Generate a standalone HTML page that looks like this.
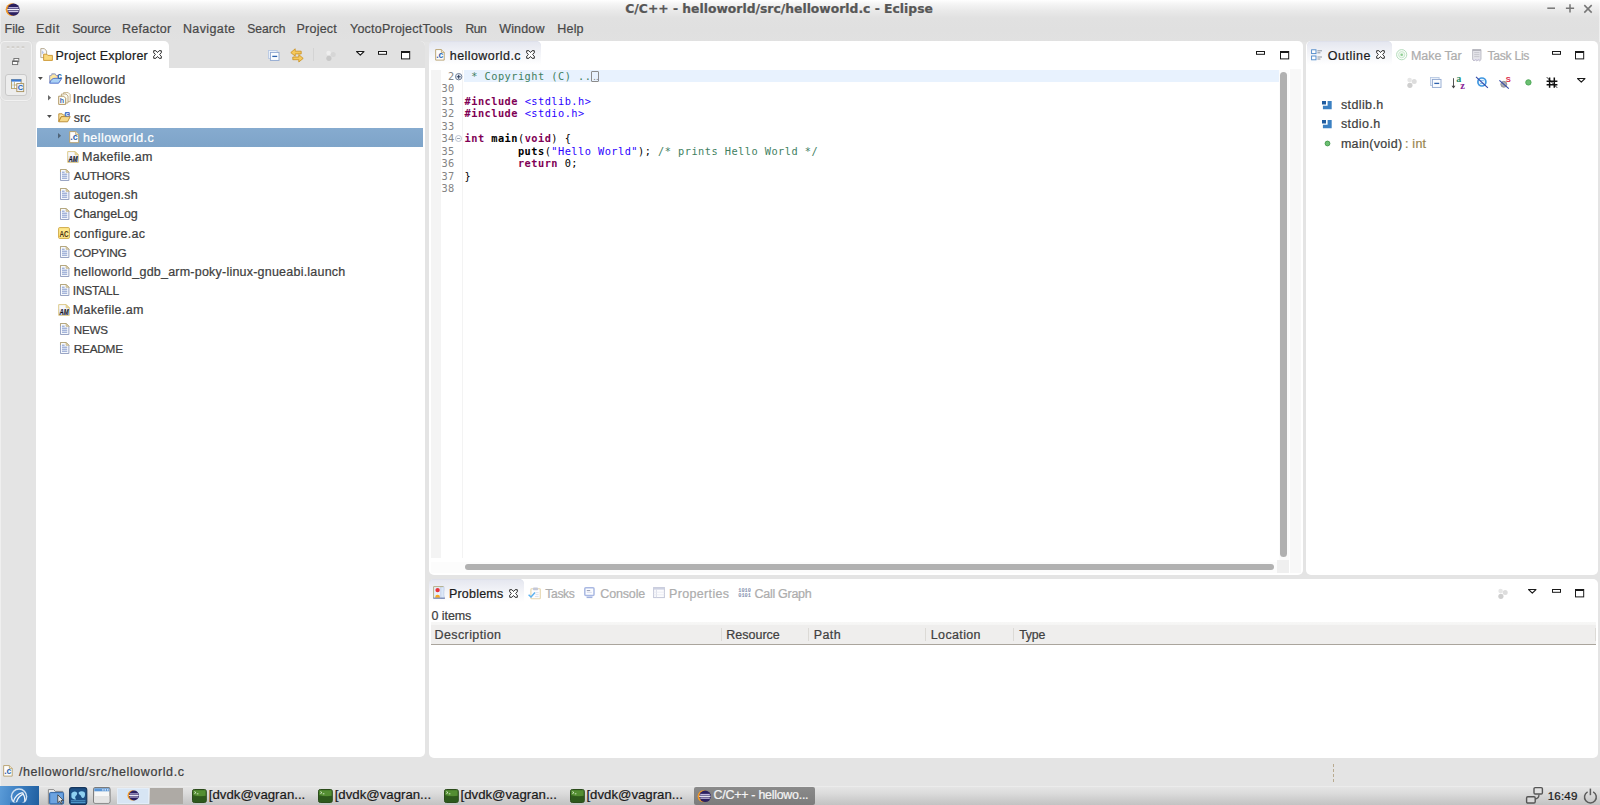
<!DOCTYPE html>
<html lang="en">
<head>
<meta charset="utf-8">
<title>C/C++ - helloworld/src/helloworld.c - Eclipse</title>
<style>
*{box-sizing:border-box;margin:0;padding:0}
html,body{width:1600px;height:805px;overflow:hidden;background:#e4e4e4}
body{position:relative;font-family:"Liberation Sans",sans-serif;font-size:12.5px;letter-spacing:.25px;color:#3c3c3c;line-height:1}
.abs{position:absolute}
svg{overflow:visible;opacity:.999}
svg text{letter-spacing:0}
.t{position:absolute;white-space:pre;line-height:16px;height:16px;-webkit-text-stroke:.22px currentColor}
#titlebar{left:0;top:0;width:1600px;height:42px;background:linear-gradient(#ffffff 0,#f5f5f5 4px,#e9e9e9 11px,#e1e1e1 18px,#e0e0e0 30px,#e1e1e1 42px)}
#title{left:625.3px;top:0.5px;font-family:"DejaVu Sans","Liberation Sans",sans-serif;font-weight:bold;font-size:12.35px;letter-spacing:0;color:#575757}
.panel{position:absolute;background:#fff;border-radius:5px}
.tab{position:absolute;background:#fff;border-radius:5px 5px 0 0}
.act{color:#1e1e1e}
.dim{color:#a2a2a2}
.code{position:absolute;white-space:pre;font-family:"DejaVu Sans Mono","Liberation Mono",monospace;font-size:10.3px;letter-spacing:.47px;line-height:12.5px;height:12.5px;color:#000}
.ln{color:#848484}
.kw{color:#7f0055;font-weight:bold}
.b{font-weight:bold}
.inc{color:#2a00ff}
.cm{color:#3f7f5f}
.tk{color:#1a1a1a;font-size:13px;letter-spacing:.2px}
</style>
</head>
<body>
<div id="titlebar" class="abs"></div>
<div id="title" class="t">C/C++ - helloworld/src/helloworld.c - Eclipse</div>
<svg class="abs" style="left:4.76px;top:2.89px;" width="14.8433" height="13.2167" viewBox="0 0 14.8433 13.2167"><circle cx="6.91333" cy="6.60833" r="6.283" fill="#f39a27"/><circle cx="8.54" cy="6.60833" r="6.1" fill="#2c2060"/><rect x="3.45667" y="4.06667" width="9.96333" height="1.27083" fill="#bdb4dc"/><rect x="2.23667" y="5.9475" width="11.9967" height="1.32167" fill="#f4f2fa"/><rect x="3.45667" y="7.93" width="9.96333" height="1.27083" fill="#cfc8e6"/></svg>
<svg class="abs" style="left:1545.00px;top:3.00px;" width="52" height="14" viewBox="0 0 52 14"><path d="M2.300 5.200h7.700" stroke="#767676" stroke-width="1.500" fill="none"/><path d="M20.900 5.300h8.200M25 1.200v8.300" stroke="#767676" stroke-width="1.500" fill="none"/><path d="M39.300 2.100l7.400 7.500M46.700 2.100l-7.400 7.500" stroke="#767676" stroke-width="1.500" fill="none"/></svg>
<div class="t" style="left:4.60px;top:21.00px;letter-spacing:0.003px;color:#484848">File</div>
<div class="t" style="left:36.10px;top:21.00px;letter-spacing:0.611px;color:#484848">Edit</div>
<div class="t" style="left:72.20px;top:21.00px;letter-spacing:-0.171px;color:#484848">Source</div>
<div class="t" style="left:121.90px;top:21.00px;letter-spacing:0.303px;color:#484848">Refactor</div>
<div class="t" style="left:182.90px;top:21.00px;letter-spacing:0.388px;color:#484848">Navigate</div>
<div class="t" style="left:247.30px;top:21.00px;letter-spacing:-0.019px;font-size:12.1px;color:#484848">Search</div>
<div class="t" style="left:296.50px;top:21.00px;letter-spacing:0.228px;color:#484848">Project</div>
<div class="t" style="left:350.00px;top:21.00px;letter-spacing:0.228px;color:#484848">YoctoProjectTools</div>
<div class="t" style="left:465.40px;top:21.00px;letter-spacing:-0.430px;font-size:12.1px;color:#484848">Run</div>
<div class="t" style="left:499.20px;top:21.00px;letter-spacing:0.174px;color:#484848">Window</div>
<div class="t" style="left:557.30px;top:21.00px;letter-spacing:0.181px;color:#484848">Help</div>
<div class="abs" style="left:0;top:0;width:1px;height:786px;background:rgba(255,255,255,.4)"></div>
<div class="abs" style="left:1598.700px;top:0;width:1.300px;height:42px;background:rgba(255,255,255,.45)"></div>
<div class="abs" style="left:.4px;top:41.4px;width:31.8px;height:60px;background:#e1e1e1;border:1px solid #f1f1f1;border-radius:4px 4px 6px 6px;box-shadow:0 0 0 .5px #dadada"></div>
<svg class="abs" style="left:6.00px;top:45.60px;" width="20" height="3" viewBox="0 0 20 3"><path d="M.8 1.200h2.600M5.700 1.200h2.600M10.600 1.200h2.600M15.700 1.200h2.600" stroke="#c6c2ba" stroke-width="1.300"/><path d="M.8 2.300h2.600M5.700 2.300h2.600M10.600 2.300h2.600M15.700 2.300h2.600" stroke="#f2f2f2" stroke-width=".8"/></svg>
<svg class="abs" style="left:12.00px;top:58.00px;" width="8" height="7.4" viewBox="0 0 8 7.4"><rect x="1.900" y=".5" width="4.900" height="3.300" fill="#f6f6f6" stroke="#6e6e6e" stroke-width=".9"/><rect x=".5" y="3.100" width="5.200" height="3.500" fill="#fbfbfb" stroke="#6e6e6e" stroke-width=".9"/><path d="M.5 3.300h5.200" stroke="#5a5a5a" stroke-width="1.200"/></svg>
<div class="abs" style="left:5.3px;top:74.3px;width:21.4px;height:21.4px;background:#ededed;border:1px solid #c9c9c9;border-radius:3px"></div>
<svg class="abs" style="left:10.60px;top:78.80px;" width="14" height="14" viewBox="0 0 14 14"><rect x=".5" y=".5" width="9.600" height="9" fill="#fff" stroke="#b39c62" stroke-width=".9"/><rect x=".3" y=".3" width="10" height="2.300" fill="#3b7ad6"/><path d="M3.400 2.800v6.600M.5 6h9.600" stroke="#b8a26c" stroke-width=".8"/><rect x="1" y="3.100" width="2" height="2.400" fill="#dff1ff"/><rect x="1" y="6.600" width="2" height="2.500" fill="#dff1ff"/><rect x="5.800" y="4.600" width="6.900" height="8" fill="#eaf1fb" stroke="#a8905a" stroke-width=".9"/><text x="9.300" y="11.400" font-family="Liberation Sans,sans-serif" font-weight="bold" font-size="7.400" fill="#2a62b4" text-anchor="middle">C</text></svg>
<div class="panel" style="left:36px;top:41.4px;width:388.6px;height:716.1px"></div>
<div class="abs" style="left:36px;top:41.4px;width:388.6px;height:26.2px;background:#e1e1e1;border-radius:5px 5px 0 0"></div>
<div class="tab" style="left:36px;top:41.4px;width:132.6px;height:27px"></div>
<div class="panel" style="left:428.8px;top:41px;width:874.2px;height:534.4px"></div>
<div class="panel" style="left:1306.3px;top:41px;width:291.4px;height:534.4px"></div>
<div class="panel" style="left:428.8px;top:579px;width:1168.9px;height:178.5px"></div>
<div class="tab" style="left:429.2px;top:41.4px;width:111.6px;height:26px;box-shadow:inset 0 .6px 0 #d9dce8;background:linear-gradient(#e4e6ef,#f3f4f8 50%,#fff 92%)"></div>
<div class="tab" style="left:1306.6px;top:41.4px;width:85.4px;height:26px;box-shadow:inset 0 .6px 0 #d9dce8;background:linear-gradient(#e4e6ef,#f3f4f8 50%,#fff 92%)"></div>
<div class="tab" style="left:429.2px;top:579.3px;width:95.200px;height:25px;box-shadow:inset 0 .6px 0 #d9dce8;background:linear-gradient(#e4e6ef,#f3f4f8 50%,#fff 92%)"></div>
<svg class="abs" style="left:39.50px;top:47.50px;" width="14" height="13.5" viewBox="0 0 14 13.5"><path d="M.8 .6h3.6l2.2 2.4v6.6H.8z" fill="#f7f7fb" stroke="#a89a78" stroke-width=".8"/><path d="M1.8 2.2l2.2 2.4-2.2 2z" fill="#b9c6e8"/><path d="M3.6 6.2h3.2l1 1.2h4.6v5H3.6z" fill="#f9d77a" stroke="#c8932e" stroke-width=".9" stroke-linejoin="round"/></svg>
<div class="t" style="left:55.50px;top:48.00px;letter-spacing:0.223px;color:#1c1c1c">Project Explorer</div>
<svg class="abs" style="left:153.20px;top:50.20px;" width="9" height="9" viewBox="0 0 9 9"><path d="M.7 .7h2.2l1.6 1.8L6.1 .7h2.2v2.1L6.6 4.5l1.7 1.7v2.1H6.1L4.5 6.5 2.9 8.3H.7V6.2l1.7-1.7L.7 2.8z" fill="#fff" stroke="#2b2b2b" stroke-width="1" stroke-linejoin="miter"/></svg>
<svg class="abs" style="left:268.20px;top:50.00px;" width="11.5" height="11" viewBox="0 0 11.5 11"><rect x=".5" y=".5" width="8.6" height="8" fill="#eef3fb" stroke="#b9c9e3" stroke-width=".9"/><rect x="2.4" y="2.4" width="8.6" height="8" fill="#fbfdff" stroke="#8ea6cf" stroke-width=".9"/><path d="M4.3 6.4h4.9" stroke="#2d62ad" stroke-width="1.3"/></svg>
<svg class="abs" style="left:290.00px;top:47.60px;" width="14" height="15" viewBox="0 0 14 15"><path d="M5.2 .8L.8 4.6l4.4 3.6V5.9h6V3.2h-6z" fill="#f6c95c" stroke="#c98f1f" stroke-width=".8" stroke-linejoin="round"/><path d="M8.8 6.6l4.4 3.8-4.4 3.6v-2.3h-6V9h6z" fill="#f6c95c" stroke="#c98f1f" stroke-width=".8" stroke-linejoin="round"/></svg>
<div class="abs" style="left:313px;top:48px;width:1px;height:12.5px;background:#d4d4d4"></div>
<svg class="abs" style="left:325.00px;top:50.00px;" width="11.5" height="11.5" viewBox="0 0 11.5 11.5"><circle cx="3.6" cy="3" r="2.3" fill="#eeeeee"/><circle cx="8.2" cy="4.4" r="2.5" fill="#d6d6d6"/><circle cx="3.9" cy="8.3" r="2.6" fill="#c8c8c8"/></svg>
<svg class="abs" style="left:355.80px;top:50.60px;" width="8.6" height="4.6" viewBox="0 0 8.6 4.6"><path d="M.6 .5h7.4 L4.3 4.2 z" fill="#fff" stroke="#1a1a1a" stroke-width="1.1" stroke-linejoin="round"/></svg>
<svg class="abs" style="left:378.20px;top:50.60px;" width="9" height="4" viewBox="0 0 9 4"><rect x=".5" y=".5" width="8" height="2.8" fill="#fff" stroke="#1a1a1a" stroke-width="1"/></svg>
<svg class="abs" style="left:401.20px;top:50.60px;" width="9.4" height="8.6" viewBox="0 0 9.4 8.6"><rect x=".5" y=".5" width="8.2" height="7.4" fill="#fff" stroke="#1a1a1a" stroke-width="1"/><rect x=".5" y=".2" width="8.2" height="1.8" fill="#1a1a1a"/></svg>
<div class="abs" style="left:37.4px;top:127.5px;width:385.4px;height:19px;background:linear-gradient(#86abcf,#7ea4c9)"></div>
<div class="t" style="left:64.80px;top:72.00px;letter-spacing:0.452px;color:#404040">helloworld</div>
<svg class="abs" style="left:37.90px;top:77.00px;" width="5" height="3.2" viewBox="0 0 5 3.2"><path d="M0 0h4.800L2.400 3z" fill="#4d4d4d"/></svg>
<svg class="abs" style="left:48.60px;top:72.90px;" width="13.5" height="11" viewBox="0 0 13.5 11"><path d="M.7 9.600V2.600h1.600l.8-1.700h3.200l.8 1.700h2.400v2.600" fill="#fde7a0" stroke="#8a94c4" stroke-width=".9" stroke-linejoin="round"/><path d="M2.300 .9h3.200" stroke="#aab0c4" stroke-width=".9"/><path d="M.7 10.200C1.500 6.800 3.400 5.300 6 5.300h6.800L9.600 10.200z" fill="#a9d1f5" stroke="#4a6ac8" stroke-width=".9" stroke-linejoin="round"/><text x="10.400" y="5.900" font-family="Liberation Sans,sans-serif" font-weight="bold" font-size="8.800" fill="#2a68a8" text-anchor="middle">c</text></svg>
<div class="t" style="left:72.80px;top:91.00px;letter-spacing:0.199px;color:#404040">Includes</div>
<svg class="abs" style="left:48.00px;top:94.70px;" width="3.2" height="5.4" viewBox="0 0 3.2 5.4"><path d="M0 0v5.4L3.1 2.7z" fill="#6a6a6a"/></svg>
<svg class="abs" style="left:58.00px;top:91.90px;" width="13" height="13" viewBox="0 0 13 13"><path d="M5.6 .6h4.6l2 2v7h-6.6z" fill="#faf8f0" stroke="#bda67a" stroke-width=".8"/><path d="M3.4 2h4.6l2 2v7h-6.6z" fill="#faf8f0" stroke="#b59c6c" stroke-width=".8"/><path d="M.7 4.2h5l2 2v6.2H.7z" fill="#fffef8" stroke="#a88c55" stroke-width=".9"/><text x="3.9" y="11.4" font-family="Liberation Sans,sans-serif" font-weight="bold" font-size="7" fill="#3763ad" text-anchor="middle">h</text></svg>
<div class="t" style="left:73.80px;top:110.00px;letter-spacing:-0.106px;color:#404040">src</div>
<svg class="abs" style="left:47.40px;top:115.40px;" width="5" height="3.2" viewBox="0 0 5 3.2"><path d="M0 0h4.800L2.400 3z" fill="#4d4d4d"/></svg>
<svg class="abs" style="left:58.00px;top:111.50px;" width="13" height="10.6" viewBox="0 0 13 10.6"><path d="M.8 1.8h3.4l1 1.2h3.4v1.6H3.2L.8 9.4z" fill="#fbe7a8" stroke="#b8882c" stroke-width=".9" stroke-linejoin="round"/><path d="M3.4 4.6h8.8L9.6 9.8H.7z" fill="#f6d98a" stroke="#b8882c" stroke-width=".9" stroke-linejoin="round"/><rect x="6.8" y="0" width="5" height="4.6" rx="1" fill="#4a74c9"/><text x="9.3" y="3.9" font-family="Liberation Sans,sans-serif" font-weight="bold" font-size="5.4" fill="#fff" text-anchor="middle">c</text></svg>
<div class="t" style="left:83.00px;top:130.00px;letter-spacing:0.422px;color:#fff">helloworld.c</div>
<svg class="abs" style="left:57.60px;top:133.10px;" width="3.2" height="5.4" viewBox="0 0 3.2 5.4"><path d="M0 0v5.4L3.1 2.7z" fill="#4f6478"/></svg>
<svg class="abs" style="left:68.80px;top:130.70px;" width="10.4" height="12.4" viewBox="0 0 10.4 12.4"><path d="M.7 .6h6l3 3v8.1H.7z" fill="#fdfdfd" stroke="#b39a63" stroke-width=".9"/><path d="M6.7 .6v3h3" fill="#f3ead2" stroke="#b39a63" stroke-width=".8"/><text x="5" y="9.4" font-family="Liberation Sans,sans-serif" font-weight="bold" font-size="9" fill="#2d62ad" text-anchor="middle">.c</text></svg>
<div class="t" style="left:82.00px;top:149.00px;letter-spacing:0.313px;color:#404040">Makefile.am</div>
<svg class="abs" style="left:67.20px;top:150.70px;" width="12" height="12" viewBox="0 0 12 12"><path d="M.7 .6h7.400l3.200 3.200v7.600H.7z" fill="#f7f8fd" stroke="#d9c47e" stroke-width=".9"/><rect x="1.200" y="5" width="9.600" height="3" fill="#cfd5ee" opacity=".55"/><rect x="1.200" y="8" width="9.600" height="3" fill="#b4bce2" opacity=".8"/><path d="M8.100 .6v3.200h3.200z" fill="#ecd89a" stroke="#d9c47e" stroke-width=".7"/><text x="6" y="10.600" font-family="Liberation Sans,sans-serif" font-weight="bold" font-style="italic" font-size="8.400" fill="#111" text-anchor="middle" textLength="9.200" lengthAdjust="spacingAndGlyphs">AM</text></svg>
<div class="t" style="left:73.80px;top:168.00px;letter-spacing:-0.268px;font-size:11.8px;color:#404040">AUTHORS</div>
<svg class="abs" style="left:59.90px;top:169.20px;" width="9.4" height="12" viewBox="0 0 9.4 12"><path d="M.5 .5h5.6l2.8 2.8v8.2H.5z" fill="#f7f9fd" stroke="#8d9abc" stroke-width=".9"/><path d="M.5 3V.5h5.6l2.8 2.8" fill="none" stroke="#b9a877" stroke-width=".9"/><path d="M6.1 .5v2.8h2.8z" fill="#e9dfbd" stroke="#b9a877" stroke-width=".7"/><path d="M2 3.2h2.6M2 5.2h5.2M2 7.2h5.2M2 9.2h5.2" stroke="#7d95c9" stroke-width="1"/></svg>
<div class="t" style="left:73.80px;top:187.00px;letter-spacing:0.233px;color:#404040">autogen.sh</div>
<svg class="abs" style="left:59.90px;top:188.40px;" width="9.4" height="12" viewBox="0 0 9.4 12"><path d="M.5 .5h5.6l2.8 2.8v8.2H.5z" fill="#f7f9fd" stroke="#8d9abc" stroke-width=".9"/><path d="M.5 3V.5h5.6l2.8 2.8" fill="none" stroke="#b9a877" stroke-width=".9"/><path d="M6.1 .5v2.8h2.8z" fill="#e9dfbd" stroke="#b9a877" stroke-width=".7"/><path d="M2 3.2h2.6M2 5.2h5.2M2 7.2h5.2M2 9.2h5.2" stroke="#7d95c9" stroke-width="1"/></svg>
<div class="t" style="left:73.80px;top:206.00px;letter-spacing:-0.086px;color:#404040">ChangeLog</div>
<svg class="abs" style="left:59.90px;top:207.60px;" width="9.4" height="12" viewBox="0 0 9.4 12"><path d="M.5 .5h5.6l2.8 2.8v8.2H.5z" fill="#f7f9fd" stroke="#8d9abc" stroke-width=".9"/><path d="M.5 3V.5h5.6l2.8 2.8" fill="none" stroke="#b9a877" stroke-width=".9"/><path d="M6.1 .5v2.8h2.8z" fill="#e9dfbd" stroke="#b9a877" stroke-width=".7"/><path d="M2 3.2h2.6M2 5.2h5.2M2 7.2h5.2M2 9.2h5.2" stroke="#7d95c9" stroke-width="1"/></svg>
<div class="t" style="left:73.80px;top:226.00px;letter-spacing:0.287px;color:#404040">configure.ac</div>
<svg class="abs" style="left:58.20px;top:226.80px;" width="12" height="12" viewBox="0 0 12 12"><rect x=".6" y=".6" width="10.8" height="10.8" rx="1" fill="#ffe88c" stroke="#c9a23c" stroke-width=".9"/><text x="6" y="9.9" font-family="Liberation Sans,sans-serif" font-weight="bold" font-size="8.6" fill="#4a3010" text-anchor="middle" textLength="9.2" lengthAdjust="spacingAndGlyphs">AC</text></svg>
<div class="t" style="left:73.80px;top:245.00px;letter-spacing:-0.255px;font-size:11.8px;color:#404040">COPYING</div>
<svg class="abs" style="left:59.90px;top:246.00px;" width="9.4" height="12" viewBox="0 0 9.4 12"><path d="M.5 .5h5.6l2.8 2.8v8.2H.5z" fill="#f7f9fd" stroke="#8d9abc" stroke-width=".9"/><path d="M.5 3V.5h5.6l2.8 2.8" fill="none" stroke="#b9a877" stroke-width=".9"/><path d="M6.1 .5v2.8h2.8z" fill="#e9dfbd" stroke="#b9a877" stroke-width=".7"/><path d="M2 3.2h2.6M2 5.2h5.2M2 7.2h5.2M2 9.2h5.2" stroke="#7d95c9" stroke-width="1"/></svg>
<div class="t" style="left:73.80px;top:264.00px;letter-spacing:0.221px;color:#404040">helloworld_gdb_arm-poky-linux-gnueabi.launch</div>
<svg class="abs" style="left:59.90px;top:265.20px;" width="9.4" height="12" viewBox="0 0 9.4 12"><path d="M.5 .5h5.6l2.8 2.8v8.2H.5z" fill="#f7f9fd" stroke="#8d9abc" stroke-width=".9"/><path d="M.5 3V.5h5.6l2.8 2.8" fill="none" stroke="#b9a877" stroke-width=".9"/><path d="M6.1 .5v2.8h2.8z" fill="#e9dfbd" stroke="#b9a877" stroke-width=".7"/><path d="M2 3.2h2.6M2 5.2h5.2M2 7.2h5.2M2 9.2h5.2" stroke="#7d95c9" stroke-width="1"/></svg>
<div class="t" style="left:72.80px;top:283.00px;letter-spacing:-0.237px;font-size:12px;color:#404040">INSTALL</div>
<svg class="abs" style="left:59.90px;top:284.40px;" width="9.4" height="12" viewBox="0 0 9.4 12"><path d="M.5 .5h5.6l2.8 2.8v8.2H.5z" fill="#f7f9fd" stroke="#8d9abc" stroke-width=".9"/><path d="M.5 3V.5h5.6l2.8 2.8" fill="none" stroke="#b9a877" stroke-width=".9"/><path d="M6.1 .5v2.8h2.8z" fill="#e9dfbd" stroke="#b9a877" stroke-width=".7"/><path d="M2 3.2h2.6M2 5.2h5.2M2 7.2h5.2M2 9.2h5.2" stroke="#7d95c9" stroke-width="1"/></svg>
<div class="t" style="left:72.80px;top:302.00px;letter-spacing:0.313px;color:#404040">Makefile.am</div>
<svg class="abs" style="left:58.00px;top:304.30px;" width="12" height="12" viewBox="0 0 12 12"><path d="M.7 .6h7.400l3.200 3.200v7.600H.7z" fill="#f7f8fd" stroke="#d9c47e" stroke-width=".9"/><rect x="1.200" y="5" width="9.600" height="3" fill="#cfd5ee" opacity=".55"/><rect x="1.200" y="8" width="9.600" height="3" fill="#b4bce2" opacity=".8"/><path d="M8.100 .6v3.200h3.200z" fill="#ecd89a" stroke="#d9c47e" stroke-width=".7"/><text x="6" y="10.600" font-family="Liberation Sans,sans-serif" font-weight="bold" font-style="italic" font-size="8.400" fill="#111" text-anchor="middle" textLength="9.200" lengthAdjust="spacingAndGlyphs">AM</text></svg>
<div class="t" style="left:73.80px;top:322.00px;letter-spacing:-0.183px;font-size:11.6px;color:#404040">NEWS</div>
<svg class="abs" style="left:59.90px;top:322.80px;" width="9.4" height="12" viewBox="0 0 9.4 12"><path d="M.5 .5h5.6l2.8 2.8v8.2H.5z" fill="#f7f9fd" stroke="#8d9abc" stroke-width=".9"/><path d="M.5 3V.5h5.6l2.8 2.8" fill="none" stroke="#b9a877" stroke-width=".9"/><path d="M6.1 .5v2.8h2.8z" fill="#e9dfbd" stroke="#b9a877" stroke-width=".7"/><path d="M2 3.2h2.6M2 5.2h5.2M2 7.2h5.2M2 9.2h5.2" stroke="#7d95c9" stroke-width="1"/></svg>
<div class="t" style="left:73.80px;top:341.00px;letter-spacing:-0.240px;font-size:11.8px;color:#404040">README</div>
<svg class="abs" style="left:59.90px;top:342.00px;" width="9.4" height="12" viewBox="0 0 9.4 12"><path d="M.5 .5h5.6l2.8 2.8v8.2H.5z" fill="#f7f9fd" stroke="#8d9abc" stroke-width=".9"/><path d="M.5 3V.5h5.6l2.8 2.8" fill="none" stroke="#b9a877" stroke-width=".9"/><path d="M6.1 .5v2.8h2.8z" fill="#e9dfbd" stroke="#b9a877" stroke-width=".7"/><path d="M2 3.2h2.6M2 5.2h5.2M2 7.2h5.2M2 9.2h5.2" stroke="#7d95c9" stroke-width="1"/></svg>
<svg class="abs" style="left:435.20px;top:48.80px;" width="9.88" height="11.78" viewBox="0 0 10.4 12.4"><path d="M.7 .6h6l3 3v8.1H.7z" fill="#fdfdfd" stroke="#b39a63" stroke-width=".9"/><path d="M6.7 .6v3h3" fill="#f3ead2" stroke="#b39a63" stroke-width=".8"/><text x="5" y="9.4" font-family="Liberation Sans,sans-serif" font-weight="bold" font-size="9" fill="#2d62ad" text-anchor="middle">.c</text></svg>
<div class="t" style="left:449.80px;top:48.00px;letter-spacing:0.432px;color:#1c1c1c">helloworld.c</div>
<svg class="abs" style="left:525.60px;top:50.20px;" width="9" height="9" viewBox="0 0 9 9"><path d="M.7 .7h2.2l1.6 1.8L6.1 .7h2.2v2.1L6.6 4.5l1.7 1.7v2.1H6.1L4.5 6.5 2.9 8.3H.7V6.2l1.7-1.7L.7 2.8z" fill="#fff" stroke="#2b2b2b" stroke-width="1" stroke-linejoin="miter"/></svg>
<svg class="abs" style="left:1255.80px;top:50.60px;" width="9" height="4" viewBox="0 0 9 4"><rect x=".5" y=".5" width="8" height="2.8" fill="#fff" stroke="#1a1a1a" stroke-width="1"/></svg>
<svg class="abs" style="left:1279.60px;top:50.60px;" width="9.4" height="8.6" viewBox="0 0 9.4 8.6"><rect x=".5" y=".5" width="8.2" height="7.4" fill="#fff" stroke="#1a1a1a" stroke-width="1"/><rect x=".5" y=".2" width="8.2" height="1.8" fill="#1a1a1a"/></svg>
<div class="abs" style="left:431.2px;top:70px;width:9.800px;height:488px;background:#f4f4f4"></div>
<div class="abs" style="left:462px;top:70px;width:1px;height:488px;background:#f3f3f3"></div>
<div class="abs" style="left:463.8px;top:70.2px;width:814.8px;height:12.2px;background:#e8f2fe"></div>
<div class="code ln" style="left:441.40px;top:70.00px"> 2</div>
<div class="code ln" style="left:441.40px;top:82.00px">30</div>
<div class="code ln" style="left:441.40px;top:95.00px">31</div>
<div class="code ln" style="left:441.40px;top:107.00px">32</div>
<div class="code ln" style="left:441.40px;top:120.00px">33</div>
<div class="code ln" style="left:441.40px;top:132.00px">34</div>
<div class="code ln" style="left:441.40px;top:145.00px">35</div>
<div class="code ln" style="left:441.40px;top:157.00px">36</div>
<div class="code ln" style="left:441.40px;top:170.00px">37</div>
<div class="code ln" style="left:441.40px;top:182.00px">38</div>
<div class="code " style="left:464.60px;top:70.00px"><span class="cm"> * Copyright (C) ..</span></div>
<div class="abs" style="left:590.9px;top:70.6px;width:7.8px;height:11.7px;border:1px solid #8c8c8c;border-radius:1px"></div>
<div class="code" style="left:592.2px;top:72.15px;color:#7a7a7a;letter-spacing:-1.6px;font-size:7.5px">..</div>
<div class="code " style="left:464.60px;top:95.00px"><span class="kw">#include</span> <span class="inc">&lt;stdlib.h&gt;</span></div>
<div class="code " style="left:464.60px;top:107.00px"><span class="kw">#include</span> <span class="inc">&lt;stdio.h&gt;</span></div>
<div class="code " style="left:464.60px;top:132.00px"><span class="kw">int</span> <span class="b">main</span>(<span class="kw">void</span>) {</div>
<div class="code " style="left:464.60px;top:145.00px">        <span class="b">puts</span>(<span class="inc">"Hello World"</span>); <span class="cm">/* prints Hello World */</span></div>
<div class="code " style="left:464.60px;top:157.00px">        <span class="kw">return</span> 0;</div>
<div class="code " style="left:464.60px;top:170.00px">}</div>
<svg class="abs" style="left:455.00px;top:72.60px;" width="7.4" height="7.4" viewBox="0 0 7.4 7.4"><circle cx="3.700" cy="3.700" r="3.200" fill="#eef2f8" stroke="#6f7f98" stroke-width="1"/><path d="M1.700 3.700h4M3.700 1.700v4" stroke="#2e3f5e" stroke-width="1.100"/></svg>
<svg class="abs" style="left:455.20px;top:135.40px;" width="7" height="7" viewBox="0 0 7 7"><circle cx="3.5" cy="3.5" r="3" fill="#fff" stroke="#b3bccb" stroke-width=".9"/><path d="M1.8 3.5h3.4" stroke="#9aa6b8" stroke-width="1"/></svg>
<div class="abs" style="left:1289.6px;top:69px;width:11.6px;height:504px;background:#f8f8f8"></div>
<div class="abs" style="left:1278.6px;top:70px;width:10.4px;height:503px;background:#fcfcfc"></div>
<div class="abs" style="left:431px;top:561.6px;width:858px;height:11.2px;background:#fcfcfc"></div>
<div class="abs" style="left:1277.2px;top:559.6px;width:12px;height:13.4px;background:#efefef"></div>
<div class="abs" style="left:1280.2px;top:72.4px;width:7px;height:484.6px;background:#b1b1b1;border-radius:3.5px"></div>
<div class="abs" style="left:464.6px;top:563.6px;width:809.2px;height:6.8px;background:#b1b1b1;border-radius:3.4px"></div>
<svg class="abs" style="left:1311.40px;top:48.60px;" width="12" height="12" viewBox="0 0 12 12"><rect x=".6" y=".8" width="4.4" height="3.8" fill="#fff" stroke="#4a86c8" stroke-width=".9"/><rect x=".6" y="7" width="4.4" height="3.8" fill="#fff" stroke="#4a86c8" stroke-width=".9"/><path d="M6.4 1.8h4.6M6.4 3.8h3M6.4 8h4.6M6.4 10h3" stroke="#7f8a99" stroke-width=".9"/></svg>
<div class="t" style="left:1327.80px;top:48.00px;letter-spacing:0.491px;color:#1c1c1c">Outline</div>
<svg class="abs" style="left:1376.20px;top:50.20px;" width="9" height="9" viewBox="0 0 9 9"><path d="M.7 .7h2.2l1.6 1.8L6.1 .7h2.2v2.1L6.6 4.5l1.7 1.7v2.1H6.1L4.5 6.5 2.9 8.3H.7V6.2l1.7-1.7L.7 2.8z" fill="#fff" stroke="#2b2b2b" stroke-width="1" stroke-linejoin="miter"/></svg>
<svg class="abs" style="left:1396.20px;top:48.70px;" width="11.4" height="11.4" viewBox="0 0 11.4 11.4"><circle cx="5.7" cy="5.7" r="5.100" fill="#fbfefb" stroke="#b4dcbb" stroke-width="1"/><circle cx="5.7" cy="5.7" r="3.100" fill="#f0f9f1" stroke="#c6e6cb" stroke-width=".9"/><circle cx="5.7" cy="5.7" r="1.300" fill="#8fce93"/></svg>
<div class="t" style="left:1411.00px;top:48.00px;letter-spacing:-0.077px;color:#adadad">Make Tar</div>
<svg class="abs" style="left:1472.20px;top:49.10px;" width="10" height="12.4" viewBox="0 0 10 12.4"><path d="M.6 .6h8.400v10l-1.400 1.300-1.400-1.100-1.400 1.100-1.400-1.100-1.400 1.100-1.400-1.300z" fill="#e4e4ea" stroke="#b9b9c2" stroke-width=".9"/><rect x=".6" y=".4" width="8.400" height="1.600" fill="#b4b4bc"/><path d="M2.200 3.600h5.200M2.200 5.600h5.200M2.200 7.600h5.200" stroke="#c4c4cc" stroke-width=".9"/><path d="M1.200 10.400l1.400 1 1.400-1 1.400 1 1.400-1 1.400 1" stroke="#c9c2e0" stroke-width=".8" fill="none"/></svg>
<div class="t" style="left:1487.60px;top:48.00px;letter-spacing:-0.277px;font-size:12.1px;color:#adadad">Task Lis</div>
<svg class="abs" style="left:1551.80px;top:50.60px;" width="9" height="4" viewBox="0 0 9 4"><rect x=".5" y=".5" width="8" height="2.8" fill="#fff" stroke="#1a1a1a" stroke-width="1"/></svg>
<svg class="abs" style="left:1574.60px;top:50.60px;" width="9.4" height="8.6" viewBox="0 0 9.4 8.6"><rect x=".5" y=".5" width="8.2" height="7.4" fill="#fff" stroke="#1a1a1a" stroke-width="1"/><rect x=".5" y=".2" width="8.2" height="1.8" fill="#1a1a1a"/></svg>
<svg class="abs" style="left:1406.20px;top:76.80px;" width="11.5" height="11.5" viewBox="0 0 11.5 11.5"><circle cx="3.6" cy="3" r="2.3" fill="#e6e6e6"/><circle cx="8.2" cy="4.4" r="2.5" fill="#dddddd"/><circle cx="3.9" cy="8.3" r="2.6" fill="#cfcfcf"/></svg>
<svg class="abs" style="left:1429.70px;top:77.00px;" width="11.5" height="11" viewBox="0 0 11.5 11"><rect x=".5" y=".5" width="8.6" height="8" fill="#eef3fb" stroke="#b9c9e3" stroke-width=".9"/><rect x="2.4" y="2.4" width="8.6" height="8" fill="#fbfdff" stroke="#8ea6cf" stroke-width=".9"/><path d="M4.3 6.4h4.9" stroke="#2d62ad" stroke-width="1.3"/></svg>
<svg class="abs" style="left:1440.00px;top:70.00px;" width="150" height="24" viewBox="0 0 150 24"><path d="M13.5 8.2v9.4" stroke="#555" stroke-width="1"/><path d="M11.6 15.8h3.8l-1.9 2.6z" fill="#444"/><text x="18.8" y="12.4" font-family="Liberation Serif,serif" font-weight="bold" font-size="10" fill="#1d8a6a" text-anchor="middle">a</text><text x="22.6" y="18.6" font-family="Liberation Serif,serif" font-weight="bold" font-size="10.5" fill="#8a1e96" text-anchor="middle">z</text><circle cx="41.9" cy="12" r="4" fill="#eaf4fd" stroke="#3f97e0" stroke-width="1.7"/><path d="M40 10.600h3.800M40 13.400h3.800" stroke="#7fbdf0" stroke-width="1"/><path d="M36 6.800L47.900 17.800" stroke="#3247a8" stroke-width="1.100"/><circle cx="63.800" cy="14.300" r="3" fill="#a9a9ad" stroke="#8a8a90" stroke-width=".8"/><path d="M59.400 10.300L68.800 18.600" stroke="#3247a8" stroke-width="1.100"/><text x="68.200" y="12.300" font-family="Liberation Sans,sans-serif" font-weight="bold" font-size="7.600" fill="#dc2a4a" text-anchor="middle">S</text><circle cx="88.400" cy="12.400" r="2.700" fill="#6cbf72" stroke="#4aa653" stroke-width=".9"/><path d="M109.600 7.400v10.400M114.300 7.400v10.400M106.600 11.200h10.800M106.600 14.800h10.800" stroke="#111" stroke-width="1.500"/><path d="M106.800 7.200l10.400 10.600" stroke="#111" stroke-width=".9"/></svg>
<svg class="abs" style="left:1577.30px;top:78.20px;" width="8.6" height="4.6" viewBox="0 0 8.6 4.6"><path d="M.6 .5h7.4 L4.3 4.2 z" fill="#fff" stroke="#1a1a1a" stroke-width="1.1" stroke-linejoin="round"/></svg>
<svg class="abs" style="left:1322.00px;top:100.90px;" width="10" height="8.4" viewBox="0 0 10 8.4"><rect x="0" y="0" width="4" height="3.500" fill="#1f5c9f"/><path d="M5.600 0h4.100v8.200H.9V4.700h4.700z" fill="#3b80c2"/></svg>
<svg class="abs" style="left:1322.00px;top:120.10px;" width="10" height="8.4" viewBox="0 0 10 8.4"><rect x="0" y="0" width="4" height="3.500" fill="#1f5c9f"/><path d="M5.600 0h4.100v8.200H.9V4.700h4.700z" fill="#3b80c2"/></svg>
<svg class="abs" style="left:1323.50px;top:140.10px;" width="7" height="7" viewBox="0 0 7 7"><circle cx="3.5" cy="3.5" r="2.4" fill="#6cbf72" stroke="#3f9647" stroke-width=".9"/></svg>
<div class="t" style="left:1340.90px;top:97.00px;letter-spacing:0.392px;color:#404040">stdlib.h</div>
<div class="t" style="left:1340.90px;top:116.00px;letter-spacing:0.421px;color:#404040">stdio.h</div>
<div class="t" style="left:1340.90px;top:136.00px;letter-spacing:0.313px;color:#404040">main(void)</div>
<div class="t" style="left:1404.90px;top:136.00px;letter-spacing:0.256px;color:#9a8650">: int</div>
<svg class="abs" style="left:432.60px;top:586.30px;" width="12.4" height="12.8" viewBox="0 0 12.4 12.8"><rect x=".6" y=".6" width="8" height="11.600" fill="#e9f0fb"/><path d="M7.800 .6h3.100c.9 3.200-1.100 6.400.6 11.600H7.800z" fill="#dce8f8" stroke="#b9c7e2" stroke-width=".7"/><path d="M.6 12.200V.6h9.800" fill="none" stroke="#b5b088" stroke-width="1"/><circle cx="4.600" cy="4.100" r="2.200" fill="#e8343c"/><path d="M2.200 11.800v-.6a2.400 2.400 0 1 1 4.800 0v.6z" fill="#f6a821"/><path d="M.3 12.200h11.600" stroke="#6979a9" stroke-width="1.100"/></svg>
<div class="t" style="left:448.90px;top:586.00px;letter-spacing:0.222px;color:#1c1c1c">Problems</div>
<svg class="abs" style="left:508.80px;top:588.60px;" width="9" height="9" viewBox="0 0 9 9"><path d="M.7 .7h2.2l1.6 1.8L6.1 .7h2.2v2.1L6.6 4.5l1.7 1.7v2.1H6.1L4.5 6.5 2.9 8.3H.7V6.2l1.7-1.7L.7 2.8z" fill="#fff" stroke="#2b2b2b" stroke-width="1" stroke-linejoin="miter"/></svg>
<svg class="abs" style="left:527.60px;top:586.60px;" width="13" height="12.4" viewBox="0 0 13 12.4"><rect x="2.900" y="1.700" width="9.400" height="10" rx=".8" fill="#fdfdfd" stroke="#e6d6ae" stroke-width="1.100"/><rect x="5" y=".5" width="5" height="2.800" rx=".8" fill="#c3c7d8"/><path d="M7.600 5.600h3M7.600 7.600h3M7 9.600h3.600" stroke="#d4d8e6" stroke-width=".8"/><path d="M.6 7.800l2.400 2.200 4-4.600" stroke="#5eb2f0" stroke-width="1.500" fill="none"/></svg>
<div class="t" style="left:545.30px;top:586.00px;letter-spacing:-0.341px;font-size:12.1px;color:#adadad">Tasks</div>
<svg class="abs" style="left:584.20px;top:587.30px;" width="11" height="11.6" viewBox="0 0 11 11.6"><rect x=".8" y=".8" width="9.200" height="7.600" rx="1" fill="#fbfcff" stroke="#a9b8e2" stroke-width="1.500"/><path d="M2.800 3.600h3.400" stroke="#8a90a8" stroke-width=".9"/><path d="M2.800 5.400h5" stroke="#d0d6ea" stroke-width=".8"/><rect x="2.600" y="9.600" width="5.800" height="1.500" fill="#9fb0de"/></svg>
<div class="t" style="left:600.30px;top:586.00px;letter-spacing:-0.152px;color:#adadad">Console</div>
<svg class="abs" style="left:653.40px;top:587.20px;" width="12" height="11.2" viewBox="0 0 12 11.2"><rect x=".6" y=".6" width="10.800" height="10" fill="#fcfcfe" stroke="#c3c7d8" stroke-width="1"/><rect x=".6" y=".6" width="10.800" height="2" fill="#cdd1e2"/><path d="M3.400 2.600v8" stroke="#d0d4e2" stroke-width=".8"/><path d="M.6 5.200h10.800M.6 7.800h10.800" stroke="#e6e8f0" stroke-width=".7"/></svg>
<div class="t" style="left:669.10px;top:586.00px;letter-spacing:0.331px;color:#adadad">Properties</div>
<svg class="abs" style="left:738.00px;top:588.00px;" width="13.4" height="9.6" viewBox="0 0 13.4 9.6"><text x="6.600" y="4" font-family="Liberation Mono,monospace" font-weight="bold" font-size="5.400" fill="#8490ae" text-anchor="middle" textLength="12.600" lengthAdjust="spacingAndGlyphs">1010</text><text x="6.600" y="9" font-family="Liberation Mono,monospace" font-weight="bold" font-size="5.400" fill="#8490ae" text-anchor="middle" textLength="12.600" lengthAdjust="spacingAndGlyphs">0101</text></svg>
<div class="t" style="left:754.50px;top:586.00px;letter-spacing:-0.288px;color:#adadad">Call Graph</div>
<svg class="abs" style="left:1497.40px;top:587.60px;" width="11.5" height="11.5" viewBox="0 0 11.5 11.5"><circle cx="3.6" cy="3" r="2.3" fill="#e6e6e6"/><circle cx="8.2" cy="4.4" r="2.5" fill="#dddddd"/><circle cx="3.9" cy="8.3" r="2.6" fill="#cfcfcf"/></svg>
<svg class="abs" style="left:1528.40px;top:589.00px;" width="8.6" height="4.6" viewBox="0 0 8.6 4.6"><path d="M.6 .5h7.4 L4.3 4.2 z" fill="#fff" stroke="#1a1a1a" stroke-width="1.1" stroke-linejoin="round"/></svg>
<svg class="abs" style="left:1551.80px;top:589.00px;" width="9" height="4" viewBox="0 0 9 4"><rect x=".5" y=".5" width="8" height="2.8" fill="#fff" stroke="#1a1a1a" stroke-width="1"/></svg>
<svg class="abs" style="left:1574.60px;top:589.40px;" width="9.4" height="8.6" viewBox="0 0 9.4 8.6"><rect x=".5" y=".5" width="8.2" height="7.4" fill="#fff" stroke="#1a1a1a" stroke-width="1"/><rect x=".5" y=".2" width="8.2" height="1.8" fill="#1a1a1a"/></svg>
<div class="t" style="left:431.60px;top:608.00px;letter-spacing:-0.090px;color:#404040">0 items</div>
<div class="abs" style="left:431px;top:622.2px;width:1164.8px;height:22.6px;background:linear-gradient(#f7f7f6 0,#f6f6f5 2.4px,#efeeed 3.2px,#efeeed 21.6px,#aaa59d 21.7px)"></div>
<div class="abs" style="left:721.2px;top:627.6px;width:1px;height:13.6px;background:#dcdad6"></div>
<div class="abs" style="left:808.4px;top:627.6px;width:1px;height:13.6px;background:#dcdad6"></div>
<div class="abs" style="left:925.4px;top:627.6px;width:1px;height:13.6px;background:#dcdad6"></div>
<div class="abs" style="left:1012.8px;top:627.6px;width:1px;height:13.6px;background:#dcdad6"></div>
<div class="abs" style="left:1595px;top:627.6px;width:1px;height:13.6px;background:#dcdad6"></div>
<div class="t" style="left:434.50px;top:627.00px;letter-spacing:0.403px;color:#404040">Description</div>
<div class="t" style="left:726.30px;top:627.00px;letter-spacing:-0.006px;color:#404040">Resource</div>
<div class="t" style="left:813.80px;top:627.00px;letter-spacing:0.379px;color:#404040">Path</div>
<div class="t" style="left:930.80px;top:627.00px;letter-spacing:0.356px;color:#404040">Location</div>
<div class="t" style="left:1019.20px;top:627.00px;letter-spacing:-0.207px;font-size:12.3px;color:#404040">Type</div>
<svg class="abs" style="left:3.20px;top:764.80px;" width="9.88" height="11.78" viewBox="0 0 10.4 12.4"><path d="M.7 .6h6l3 3v8.1H.7z" fill="#fdfdfd" stroke="#b39a63" stroke-width=".9"/><path d="M6.7 .6v3h3" fill="#f3ead2" stroke="#b39a63" stroke-width=".8"/><text x="5" y="9.4" font-family="Liberation Sans,sans-serif" font-weight="bold" font-size="9" fill="#2d62ad" text-anchor="middle">.c</text></svg>
<div class="t" style="left:18.90px;top:764.00px;letter-spacing:0.581px;color:#404040">/helloworld/src/helloworld.c</div>
<div class="abs" style="left:1333.4px;top:764.4px;width:0;height:17.4px;border-left:1px dashed #b9ab90"></div>
<div class="abs" style="left:0;top:786px;width:1600px;height:19px;background:linear-gradient(#efefef 0,#e4e4e4 1.5px,#dadada 42%,#c8c8c8 85%,#c3c3c3)"></div>
<div class="abs" style="left:0;top:786.2px;width:38.9px;height:18.8px;background:linear-gradient(100deg,#5c9cd8,#3c7fc2 45%,#1f5e9f)"></div>
<svg class="abs" style="left:9.60px;top:786.60px;" width="18" height="18.4" viewBox="0 0 18 18.4"><circle cx="9" cy="9.6" r="7.6" fill="none" stroke="#dfeaf6" stroke-width="1.5" opacity=".9"/><path d="M3.4 14.6C5 9.6 8.400 6.400 12.600 5.600M12.600 5.600c1.600 2.400 2.400 5.200 2.400 8.600M6.400 15.400c1-3.600 3.400-6.600 6.200-8" fill="none" stroke="#eef4fb" stroke-width="1.300"/><rect x="0" y="15.600" width="18" height="3" fill="#2a68aa"/></svg>
<svg class="abs" style="left:47.40px;top:787.40px;" width="17.4" height="17" viewBox="0 0 17.4 17"><path d="M1.400 2.600h5.400l1.400 1.800h7.600v12.400H1.400z" fill="#f4f4f4" stroke="#8a8a8a" stroke-width="1"/><rect x="2.600" y="5.400" width="14" height="11.600" rx="1" fill="#5a94d6" stroke="#2f64a6" stroke-width="1"/><rect x="3.600" y="6.400" width="12" height="9.600" fill="#78aee6" opacity=".6"/><path d="M10.800 7.800v8l1.900-1.700 1.300 2.800 1.300-.6-1.300-2.700h2.500z" fill="#e8e8e8" stroke="#333" stroke-width=".8"/></svg>
<svg class="abs" style="left:69.40px;top:786.80px;" width="18.4" height="18" viewBox="0 0 18.4 18"><rect x=".6" y=".6" width="17.200" height="17" rx="2.400" fill="#1d4f84" stroke="#16365c" stroke-width="1.100"/><path d="M2.400 6.400c1.400-2.200 3.800-2.600 5.200-1.200 1 1 .6 2.600-.6 3.600-1.200 1-1 2.600.2 3.400-1.800.6-3.800-.2-4.800-2zM9.800 5.200c1.600-1.400 4.200-1.400 6 .2.600 1.800.2 4-1 5.400-1.200.4-2.200-.2-2.600-1.400-.4-1.400-1.600-1.400-2.200-2.400-.4-.6-.4-1.200-.2-1.800z" fill="#8fd0f0"/><path d="M2 13.800h14.400M2 15.600h14.400" stroke="#58a6d8" stroke-width=".9"/></svg>
<svg class="abs" style="left:93.20px;top:787.40px;" width="17.6" height="16.8" viewBox="0 0 17.6 16.8"><rect x=".6" y=".6" width="16.400" height="15.600" rx="1.600" fill="#f7f7f7" stroke="#7a7a7a" stroke-width="1.100"/><rect x="1.300" y="1.300" width="15" height="3" fill="#5b97d8"/><path d="M9.200 2.800h1.400M11.600 2.800h1.400M14 2.800h1.400" stroke="#e8f0fa" stroke-width="1.300"/><rect x="1.300" y="9" width="15" height="6.600" fill="#e4e4e4"/></svg>
<div class="abs" style="left:116.9px;top:788px;width:32.4px;height:15.800px;background:#d7e5f4;border:1px solid #e3edf8"></div>
<svg class="abs" style="left:126.80px;top:790.38px;" width="12.1667" height="10.8333" viewBox="0 0 12.1667 10.8333"><circle cx="5.66667" cy="5.41667" r="5.15" fill="#f39a27"/><circle cx="7" cy="5.41667" r="5" fill="#2c2060"/><rect x="2.83333" y="3.33333" width="8.16667" height="1.04167" fill="#bdb4dc"/><rect x="1.83333" y="4.875" width="9.83333" height="1.08333" fill="#f4f2fa"/><rect x="2.83333" y="6.5" width="8.16667" height="1.04167" fill="#cfc8e6"/></svg>
<div class="abs" style="left:149.900px;top:788px;width:32.800px;height:15.800px;background:#aeaaa5"></div>
<svg class="abs" style="left:191.90px;top:788.80px;" width="14.8" height="14" viewBox="0 0 14.8 14"><rect x=".5" y=".5" width="13.800" height="13" rx="1.800" fill="#33611f" stroke="#2a4a1a" stroke-width="1"/><path d="M1.200 1.200h12.400v5.600C9 7.600 5 7.200 1.200 6z" fill="#5a9636" opacity=".85"/><rect x="1.200" y="7.400" width="12.400" height="5.600" fill="#2a5219" opacity=".5"/><path d="M2.400 2.600l1.600 1-1.600 1M4.800 4.800h1.600" stroke="#eaf6de" stroke-width=".8" fill="none"/></svg>
<div class="t" style="left:208.80px;top:787.00px;letter-spacing:0.017px;font-size:13.2px;color:#1a1a1a">[dvdk@vagran...</div>
<svg class="abs" style="left:317.80px;top:788.80px;" width="14.8" height="14" viewBox="0 0 14.8 14"><rect x=".5" y=".5" width="13.800" height="13" rx="1.800" fill="#33611f" stroke="#2a4a1a" stroke-width="1"/><path d="M1.200 1.200h12.400v5.600C9 7.600 5 7.200 1.200 6z" fill="#5a9636" opacity=".85"/><rect x="1.200" y="7.400" width="12.400" height="5.600" fill="#2a5219" opacity=".5"/><path d="M2.400 2.600l1.600 1-1.600 1M4.800 4.800h1.600" stroke="#eaf6de" stroke-width=".8" fill="none"/></svg>
<div class="t" style="left:334.70px;top:787.00px;letter-spacing:0.017px;font-size:13.2px;color:#1a1a1a">[dvdk@vagran...</div>
<svg class="abs" style="left:443.60px;top:788.80px;" width="14.8" height="14" viewBox="0 0 14.8 14"><rect x=".5" y=".5" width="13.800" height="13" rx="1.800" fill="#33611f" stroke="#2a4a1a" stroke-width="1"/><path d="M1.200 1.200h12.400v5.600C9 7.600 5 7.200 1.200 6z" fill="#5a9636" opacity=".85"/><rect x="1.200" y="7.400" width="12.400" height="5.600" fill="#2a5219" opacity=".5"/><path d="M2.400 2.600l1.600 1-1.600 1M4.800 4.800h1.600" stroke="#eaf6de" stroke-width=".8" fill="none"/></svg>
<div class="t" style="left:460.50px;top:787.00px;letter-spacing:0.017px;font-size:13.2px;color:#1a1a1a">[dvdk@vagran...</div>
<svg class="abs" style="left:569.50px;top:788.80px;" width="14.8" height="14" viewBox="0 0 14.8 14"><rect x=".5" y=".5" width="13.800" height="13" rx="1.800" fill="#33611f" stroke="#2a4a1a" stroke-width="1"/><path d="M1.200 1.200h12.400v5.600C9 7.600 5 7.200 1.200 6z" fill="#5a9636" opacity=".85"/><rect x="1.200" y="7.400" width="12.400" height="5.600" fill="#2a5219" opacity=".5"/><path d="M2.400 2.600l1.600 1-1.600 1M4.800 4.800h1.600" stroke="#eaf6de" stroke-width=".8" fill="none"/></svg>
<div class="t" style="left:586.40px;top:787.00px;letter-spacing:0.017px;font-size:13.2px;color:#1a1a1a">[dvdk@vagran...</div>
<div class="abs" style="left:693.600px;top:787px;width:121.800px;height:18px;background:linear-gradient(#8a8a8a,#7c7c7c);border-radius:2px"></div>
<svg class="abs" style="left:696.68px;top:790.02px;" width="14.1133" height="12.5667" viewBox="0 0 14.1133 12.5667"><circle cx="6.57333" cy="6.28333" r="5.974" fill="#f39a27"/><circle cx="8.12" cy="6.28333" r="5.8" fill="#2c2060"/><rect x="3.28667" y="3.86667" width="9.47333" height="1.20833" fill="#bdb4dc"/><rect x="2.12667" y="5.655" width="11.4067" height="1.25667" fill="#f4f2fa"/><rect x="3.28667" y="7.54" width="9.47333" height="1.20833" fill="#cfc8e6"/></svg>
<div class="t" style="left:713.60px;top:787.00px;letter-spacing:-0.249px;font-size:12.4px;color:#f4f4f4">C/C++ - hellowo...</div>
<svg class="abs" style="left:1525.00px;top:786.00px;" width="20" height="19" viewBox="0 0 20 19"><rect x="9" y="1.600" width="8.400" height="6.400" rx="1.200" fill="#e2e2e2" stroke="#555" stroke-width="1.400"/><path d="M14 8.600c0 3-1.400 4.400-4.400 4.400" stroke="#555" stroke-width="1.300" fill="none"/><rect x="1.600" y="10.800" width="8.600" height="6.200" rx="1.200" fill="#d9d9d9" stroke="#555" stroke-width="1.400"/></svg>
<div class="t" style="left:1547.70px;top:788.00px;letter-spacing:0.159px;font-size:11.6px;color:#1a1a1a">16:49</div>
<svg class="abs" style="left:1582.60px;top:788.00px;" width="15" height="15" viewBox="0 0 15 15"><path d="M4.600 3.800a5.900 5.900 0 1 0 5.600 0" fill="none" stroke="#5c5c5c" stroke-width="1.500"/><path d="M7.400 .6v6.600" stroke="#5c5c5c" stroke-width="1.500"/></svg>
</body>
</html>
